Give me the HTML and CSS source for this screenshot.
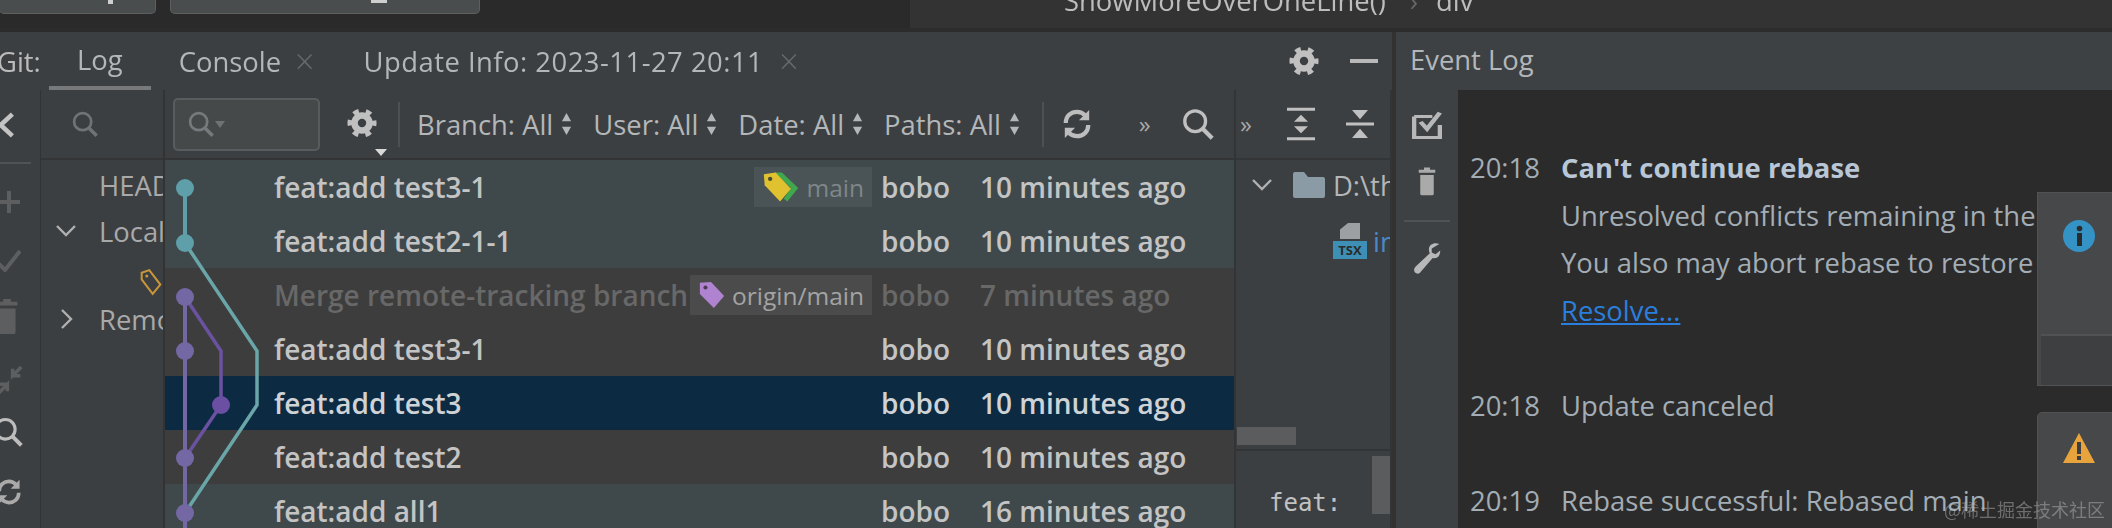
FILE: index.html
```html
<!DOCTYPE html>
<html lang="en">
<head>
    <meta charset="UTF-8">
    <title>Git Log</title>
    <link rel="stylesheet" href="styles.css">
</head>
<body>

<svg class="defs" width="0" height="0">
    <symbol id="gear" viewBox="0 0 32 32">
        <circle cx="16" cy="16" r="8" fill="none" stroke="currentColor" stroke-width="7"/>
        <circle cx="16" cy="16" r="13" fill="none" stroke="currentColor" stroke-width="5" stroke-dasharray="6 7.6" stroke-dashoffset="3"/>
    </symbol>
    <symbol id="search" viewBox="0 0 36 36">
        <circle cx="15" cy="15" r="11" fill="none" stroke="currentColor" stroke-width="3.5"/>
        <path d="M23 23l10 10" stroke="currentColor" stroke-width="4.5" fill="none"/>
    </symbol>
    <symbol id="updown" viewBox="0 0 12 26">
        <path d="M6 1l5 9H1zM6 25l-5-9h10z" fill="currentColor"/>
    </symbol>
    <symbol id="refresh" viewBox="0 0 32 36">
        <path d="M4 17C4 9 10 5 16 5c4 0 7 2 9 4M28 19c0 8-6 12-12 12-4 0-7-2-9-4" fill="none" stroke="currentColor" stroke-width="4.5"/>
        <path d="M29 3v11H18zM3 33V22h11z" fill="currentColor"/>
    </symbol>
    <symbol id="trash" viewBox="0 0 24 40">
        <path d="M8 2h8v3h7v4H1V5h7zM3 12h18v25a2 2 0 0 1-2 2H5a2 2 0 0 1-2-2z" fill="currentColor"/>
    </symbol>
</svg>

<div class="topbar">
    <div class="top-left">
        <div class="top-btn btn-a"><span class="mark mark-a"></span></div>
        <div class="top-btn btn-b"><span class="mark mark-b"></span></div>
    </div>
    <div class="crumbs">
        <span class="crumb-fn">ShowMoreOverOneLine()</span>
        <span class="crumb-sep">›</span>
        <span class="crumb-tag">div</span>
    </div>
</div>

<div class="panes">
    <div class="git">
        <div class="tabs">
            <span class="tab-label">Git:</span>
            <span class="tab tab-log">Log</span>
            <span class="tab tab-console">Console</span>
            <span class="tab-x x-console">×</span>
            <span class="tab tab-update">Update Info: 2023-11-27 20:11</span>
            <span class="tab-x x-update">×</span>
            <span class="tabs-right">
                <svg class="ico-gear"><use href="#gear"/></svg>
                <span class="minus"></span>
            </span>
        </div>

        <div class="git-body">
            <div class="strip">
                <svg class="chev-left" viewBox="0 0 20 30"><path d="M16 3L3 15l13 12" fill="none" stroke="currentColor" stroke-width="5"/></svg>
                <div class="strip-sep"></div>
                <svg class="st-plus" viewBox="0 0 24 24"><path d="M12 1v22M1 12h22" stroke="currentColor" stroke-width="4"/></svg>
                <svg class="st-check" viewBox="0 0 24 24"><path d="M2 16l6 6L23 3" fill="none" stroke="currentColor" stroke-width="4"/></svg>
                <svg class="st-trash"><use href="#trash"/></svg>
                <svg class="st-merge" viewBox="0 0 30 34"><path d="M2 32l10-10V30M12 22H3M28 2L18 12V4M18 12h9" fill="none" stroke="currentColor" stroke-width="4"/></svg>
                <svg class="st-search"><use href="#search"/></svg>
                <svg class="st-refresh"><use href="#refresh"/></svg>
            </div>

            <div class="branches">
                <div class="branches-bar">
                    <svg class="ico-search-dim"><use href="#search"/></svg>
                </div>
                <div class="tree">
                    <div class="tree-row">HEAD</div>
                    <div class="tree-row">
                        <svg class="tree-chev" viewBox="0 0 20 12"><path d="M1 1l9 9 9-9" fill="none" stroke="currentColor" stroke-width="2.4"/></svg>
                        Local
                    </div>
                    <div class="tree-row tree-tag">
                        <svg class="tag-outline" viewBox="0 0 26 32"><path d="M2 5l9-3 13 17-9 11L2 13z" fill="none" stroke="#c8963a" stroke-width="2.4"/><circle cx="8" cy="9" r="1.8" fill="#c8963a"/></svg>
                    </div>
                    <div class="tree-row">
                        <svg class="tree-chev-r" viewBox="0 0 12 20"><path d="M1 1l9 9-9 9" fill="none" stroke="currentColor" stroke-width="2.4"/></svg>
                        Remote
                    </div>
                </div>
            </div>

            <div class="log">
                <div class="log-bar">
                    <div class="search-box">
                        <svg class="ico-search-box"><use href="#search"/></svg>
                        <span class="caret-sm"></span>
                    </div>
                    <div class="gear-wrap">
                        <svg class="ico-gear"><use href="#gear"/></svg>
                        <span class="caret-w"></span>
                    </div>
                    <span class="bar-sep sep-a"></span>
                    <span class="filter">Branch: All <svg class="updown"><use href="#updown"/></svg></span>
                    <span class="filter">User: All <svg class="updown"><use href="#updown"/></svg></span>
                    <span class="filter">Date: All <svg class="updown"><use href="#updown"/></svg></span>
                    <span class="filter">Paths: All <svg class="updown"><use href="#updown"/></svg></span>
                    <span class="bar-sep sep-b"></span>
                    <svg class="ico-refresh"><use href="#refresh"/></svg>
                    <span class="more more-a">»</span>
                    <svg class="ico-search-big"><use href="#search"/></svg>
                </div>

                <div class="rows">
                    <div class="row teal">
                        <div class="subject"><span class="subject-text">feat:add test3-1</span>
                            <span class="ref">
                                <svg class="ref-ico" viewBox="0 0 42 36"><path d="M14 2h8l18 17-12 15-4-3 8-12z" fill="#3fa84f"/><path d="M2 4l13-2 17 18-12 14L3 16z" fill="#e0c12f"/><circle cx="9" cy="9" r="2.4" fill="#4a4a3a"/></svg>
                                <span class="ref-name">main</span>
                            </span>
                        </div>
                        <span class="author">bobo</span><span class="date">10 minutes ago</span>
                    </div>
                    <div class="row teal">
                        <div class="subject"><span class="subject-text">feat:add test2-1-1</span></div>
                        <span class="author">bobo</span><span class="date">10 minutes ago</span>
                    </div>
                    <div class="row dim">
                        <div class="subject"><span class="subject-text">Merge remote-tracking branch</span>
                            <span class="ref">
                                <svg class="ref-ico-sm" viewBox="0 0 30 32"><path d="M2 3l12-1 14 15-11 13L2 15z" fill="#b083d0"/><circle cx="8" cy="8" r="2.2" fill="#4a3a55"/></svg>
                                <span class="ref-name ref-light">origin/main</span>
                            </span>
                        </div>
                        <span class="author">bobo</span><span class="date">7 minutes ago</span>
                    </div>
                    <div class="row">
                        <div class="subject"><span class="subject-text">feat:add test3-1</span></div>
                        <span class="author">bobo</span><span class="date">10 minutes ago</span>
                    </div>
                    <div class="row selected">
                        <div class="subject"><span class="subject-text">feat:add test3</span></div>
                        <span class="author">bobo</span><span class="date">10 minutes ago</span>
                    </div>
                    <div class="row">
                        <div class="subject"><span class="subject-text">feat:add test2</span></div>
                        <span class="author">bobo</span><span class="date">10 minutes ago</span>
                    </div>
                    <div class="row teal">
                        <div class="subject"><span class="subject-text">feat:add all1</span></div>
                        <span class="author">bobo</span><span class="date">16 minutes ago</span>
                    </div>

                    <!-- commit graph on top of the rows -->
                    <svg class="graph" viewBox="0 0 110 368">
                        <path d="M20 28V83" stroke="#5f9fa9" stroke-width="4" fill="none"/>
                        <path d="M20 83l72 108v54l-72 108" stroke="#6aa5a8" stroke-width="3.5" fill="none"/>
                        <path d="M20 137v231" stroke="#7468a4" stroke-width="4" fill="none"/>
                        <path d="M20 137l36 54v54l-36 53" stroke="#6a52a0" stroke-width="3.5" fill="none"/>
                        <circle cx="20" cy="28" r="9" fill="#5f9fa9"/>
                        <circle cx="20" cy="83" r="9" fill="#5f9fa9"/>
                        <circle cx="20" cy="137" r="9" fill="#7468a4"/>
                        <circle cx="20" cy="191" r="9" fill="#7468a4"/>
                        <circle cx="56" cy="245" r="9" fill="#6a4fa3"/>
                        <circle cx="20" cy="298" r="9" fill="#7468a4"/>
                        <circle cx="20" cy="353" r="9" fill="#7468a4"/>
                    </svg>
                </div>
            </div>

            <div class="changes">
                <div class="changes-bar">
                    <span class="more">»</span>
                    <svg class="ico-expand" viewBox="0 0 28 44" preserveAspectRatio="none"><path d="M0 1h28v4H0zM0 39h28v4H0zM14 10l7 9H7zM14 34l-7-9h14z" fill="currentColor"/></svg>
                    <svg class="ico-collapse" viewBox="0 0 28 44" preserveAspectRatio="none"><path d="M0 20h28v4H0zM14 16L6 4h16zM14 28l8 12H6z" fill="currentColor"/></svg>
                </div>
                <div class="files">
                    <div class="file-row">
                        <svg class="tree-chev" viewBox="0 0 20 12"><path d="M1 1l9 9 9-9" fill="none" stroke="currentColor" stroke-width="2.4"/></svg>
                        <svg class="folder" viewBox="0 0 32 26"><path d="M0 2a2 2 0 0 1 2-2h9l4 5h15a2 2 0 0 1 2 2v17a2 2 0 0 1-2 2H2a2 2 0 0 1-2-2z" fill="#8a9ba5"/></svg>
                        <span class="path">D:\thread</span>
                    </div>
                    <div class="file-row file-sub">
                        <span class="tsx"><span class="tsx-page"></span><span class="tsx-label">TSX</span></span>
                        <span class="file-name">index.tsx</span>
                    </div>
                    <div class="hscroll"><span class="hthumb"></span></div>
                </div>
                <div class="details">
                    <pre class="msg">feat:
add</pre>
                    <span class="vthumb"></span>
                </div>
            </div>
        </div>
    </div>

    <div class="events">
        <div class="events-head">Event Log</div>
        <div class="events-body">
            <div class="ev-strip">
                <svg class="ev-check" viewBox="0 0 28 36" preserveAspectRatio="none"><path d="M2 7h17M2 7v27h24V18" fill="none" stroke="currentColor" stroke-width="4"/><path d="M8 14l6 9L26 2" fill="none" stroke="currentColor" stroke-width="4.5"/></svg>
                <svg class="ev-trash"><use href="#trash"/></svg>
                <div class="ev-sep"></div>
                <svg class="ev-wrench" viewBox="0 0 30 36"><path d="M28 2c-5-2-11 0-11 6 0 2 .5 3 1 4L3 26c-2 2-2 4-1 6 2 2 5 2 6 0l13-15c5 1 8-2 8-8l-5 4-4-2V7z" fill="currentColor"/></svg>
            </div>
            <div class="ev-list">
                <div class="ev-row"><span class="ev-time">20:18</span><span class="ev-title">Can't continue rebase</span></div>
                <div class="ev-row"><span class="ev-time"></span><span>Unresolved conflicts remaining in the</span></div>
                <div class="ev-row"><span class="ev-time"></span><span>You also may abort rebase to restore</span></div>
                <div class="ev-row"><span class="ev-time"></span><a class="ev-link">Resolve...</a></div>
                <div class="ev-row ev-gap"><span class="ev-time">20:18</span><span>Update canceled</span></div>
                <div class="ev-row ev-gap"><span class="ev-time">20:19</span><span>Rebase successful: Rebased main</span></div>
            </div>

            <div class="popup popup-info">
                <svg class="pop-ico" viewBox="0 0 32 32"><circle cx="16" cy="16" r="16" fill="#3592c4"/><rect x="14" y="13" width="5" height="13" fill="#2b2b2b"/><circle cx="16.500" cy="8.500" r="2.800" fill="#2b2b2b"/></svg>
                <div class="popup-foot"></div>
            </div>
            <div class="popup popup-warn">
                <svg class="pop-ico" viewBox="0 0 32 32"><path d="M16 1l16 30H0z" fill="#e8a33d"/><rect x="14" y="10" width="4" height="12" fill="#3c3f41"/><rect x="14" y="24" width="4" height="4" fill="#3c3f41"/></svg>
            </div>
            <div class="watermark">@稀土掘金技术社区</div>
        </div>
    </div>
</div>

</body>
</html>
```

FILE: styles.css
```css
html, body {
    margin: 0;
    padding: 0;
    width: 2112px;
    height: 528px;
    overflow: hidden;
    background: #323232;
    color: #bbbbbb;
    font-family: "Open Sans", "Noto Sans", Arial, sans-serif;
    font-size: 27.4px;
}

.defs { position: absolute; }
svg { display: block; flex: none; }

/* the source is a soft, upscaled capture */
.topbar, .panes { filter: blur(0.5px); }

/* Top strip */
.topbar {
    height: 28px;
    display: flex;
    border-bottom: 4px solid #2c2c2c;
    background: #333333;
    overflow: hidden;
}
.top-left {
    width: 910px;
    background: #2a2a2a;
    display: flex;
    gap: 14px;
}
.top-btn {
    height: 14px;
    background: #4a4d4e;
    border: 1px solid #5c5f60;
    border-top: none;
    border-radius: 0 0 5px 5px;
    position: relative;
    box-sizing: border-box;
}
.btn-a { width: 157px; margin-left: -1px; }
.btn-b { width: 310px; }
.mark { position: absolute; top: 0; background: #cfcfcf; }
.mark-a { left: 108px; width: 5px; height: 4px; }
.mark-b { left: 200px; width: 16px; height: 3px; }
.crumbs {
    display: flex;
    align-items: center;
    height: 0;
    margin-top: 0;
    padding-left: 154px;
    color: #bdbdbd;
    white-space: nowrap;
}
.crumb-sep { margin-left: 24px; color: #666666; }
.crumb-tag { margin-left: 18px; }

.panes { display: flex; height: 496px; }

/* Git tool window */
.git { width: 1392px; flex: none; background: #3c3f41; }
.tabs {
    height: 58px;
    display: flex;
    align-items: center;
    position: relative;
    white-space: nowrap;
}
.tab-label { margin-left: -3px; width: 47px; }
.tab { color: #b4b7b9; }
.tab-log { margin-left: 33px; height: 58px; line-height: 56px; }
.tab-log::after {
    content: "";
    position: absolute;
    left: 49px;
    width: 102px;
    bottom: 0;
    height: 4px;
    background: #77797b;
}
.tab-console { margin-left: 56px; }
.tab-x { color: #666a6c; font-size: 34px; font-weight: 300; }
.x-console { margin-left: 14px; }
.tab-update { margin-left: 49px; letter-spacing: 0.5px; }
.x-update { margin-left: 16px; }
.tabs-right {
    margin-left: auto;
    display: flex;
    align-items: center;
    gap: 31px;
    padding-right: 14px;
}
.ico-gear { width: 30px; height: 30px; color: #c0c0c0; }
.minus { width: 28px; height: 4px; background: #b8b8b8; }

.git-body { display: flex; height: 438px; }

.strip {
    width: 41px;
    flex: none;
    display: flex;
    flex-direction: column;
    color: #5c5e60;
    border-right: 1px solid #333333;
    box-sizing: border-box;
    overflow: hidden;
}
.chev-left { width: 18px; height: 30px; margin: 20px 0 0 -2px; color: #c4c4c4; }
.strip-sep { height: 2px; width: 31px; background: #505254; margin-top: 22px; }
.st-plus { width: 24px; height: 24px; margin: 26px 0 0 -3px; }
.st-check { width: 24px; height: 24px; margin: 34px 0 0 -3px; }
.st-trash { width: 24px; height: 38px; margin: 25px 0 0 -5px; }
.st-merge { width: 26px; height: 30px; margin: 30px 0 0 -3px; }
.st-search { width: 32px; height: 32px; margin: 21px 0 0 -8px; color: #bdbdbd; }
.st-refresh { width: 26px; height: 30px; margin: 29px 0 0 -4px; color: #aaaaaa; }

.branches {
    width: 124px;
    flex: none;
    border-right: 2px solid #333333;
    box-sizing: border-box;
    overflow: hidden;
}
.branches-bar {
    height: 68px;
    display: flex;
    align-items: center;
    padding-left: 30px;
    border-bottom: 2px solid #343536;
}
.ico-search-dim { width: 28px; height: 30px; color: #707375; }
.tree-row {
    height: 46px;
    display: flex;
    align-items: center;
    padding-left: 58px;
    position: relative;
    white-space: nowrap;
    color: #a9a9a9;
}
.tree-row:first-child { margin-top: 2px; }
.tree-tag { height: 42px; }
.tree-chev { width: 20px; height: 12px; position: absolute; left: 15px; color: #b0b0b0; }
.tree-chev-r { width: 12px; height: 20px; position: absolute; left: 20px; color: #b0b0b0; }
.tag-outline { width: 22px; height: 28px; position: absolute; left: 99px; top: 14px; }

.log {
    width: 1069px;
    flex: none;
    overflow: hidden;
}
.log-bar {
    height: 68px;
    display: flex;
    align-items: center;
    border-bottom: 2px solid #333435;
    white-space: nowrap;
}
.search-box {
    width: 147px;
    height: 53px;
    margin-left: 8px;
    box-sizing: border-box;
    border: 2px solid #595c5e;
    border-radius: 5px;
    background: #45494a;
    display: flex;
    align-items: center;
    padding-left: 12px;
    flex: none;
}
.ico-search-box { width: 28px; height: 32px; color: #777a7c; }
.caret-sm {
    width: 0;
    height: 0;
    border: 5px solid transparent;
    border-top: 7px solid #6f7274;
    margin: 6px 0 0 0;
}
.gear-wrap { width: 36px; height: 40px; margin-left: 27px; padding-top: 7px; position: relative; flex: none; }
.caret-w {
    position: absolute;
    right: -4px;
    bottom: -8px;
    width: 0;
    height: 0;
    border: 6px solid transparent;
    border-top: 7px solid #d8d8d8;
    border-bottom: none;
}
.bar-sep { width: 2px; height: 45px; background: #4e5052; flex: none; }
.sep-a { margin: 0 17px 0 15px; }
.sep-b { margin: 0 18px 0 1px; }
.filter {
    display: inline-flex;
    align-items: center;
    gap: 8px;
    margin-right: 21px;
    color: #b4b7b9;
}
.updown { width: 11px; height: 24px; color: #b4b7b9; }
.ico-refresh { width: 30px; height: 34px; color: #bdbdbd; }
.more { color: #a8a8a8; font-size: 24px; line-height: 1; }
.more-a { margin-left: 47px; }
.ico-search-big { width: 34px; height: 34px; margin-left: 30px; color: #c0c0c0; }

/* Commit table */
.rows { position: relative; }
.row {
    height: 54px;
    display: grid;
    grid-template-columns: 598px 108px 1fr;
    padding-left: 109px;
    align-items: center;
    font-size: 28px;
    font-weight: 600;
    color: #c4c4c4;
    background: #3d3d3d;
    white-space: nowrap;
}
.row.teal { background: #3f494c; }
.row.selected { background: #0d2a43; color: #cfd3d6; }
.row.dim { color: #686868; }
.subject { display: flex; align-items: center; overflow: hidden; height: 54px; }
.subject-text { flex: 1; overflow: hidden; }
.ref {
    flex: none;
    height: 40px;
    display: flex;
    align-items: center;
    background: #4a5356;
    font-weight: 400;
    padding: 0 8px 0 8px;
    gap: 6px;
    font-size: 24.5px;
}
.dim .ref { background: #4b4b4b; }
.ref-name { color: #7f8789; }
.ref-light { color: #a3a3a3; }
.ref-ico { width: 38px; height: 34px; }
.ref-ico-sm { width: 28px; height: 30px; }
.author { padding-left: 9px; }
.graph {
    position: absolute;
    left: 0;
    top: 0;
    width: 110px;
    height: 368px;
}

/* Changes panel */
.changes {
    width: 158px;
    flex: none;
    border-left: 2px solid #333435;
    border-right: 2px solid #333435;
    box-sizing: border-box;
    overflow: hidden;
}
.changes-bar {
    height: 68px;
    display: flex;
    align-items: center;
    color: #c0c0c0;
    border-bottom: 2px solid #343536;
    padding-left: 4px;
}
.ico-expand { width: 28px; height: 34px; margin-left: 35px; }
.ico-collapse { width: 28px; height: 34px; margin-left: 31px; }
.files { height: 287px; position: relative; white-space: nowrap; }
.file-row { display: flex; align-items: center; position: relative; height: 46px; margin-top: 2px; }
.file-row .tree-chev { left: 16px; }
.folder { width: 32px; height: 26px; margin-left: 57px; }
.path { margin-left: 8px; color: #b4b7b9; }
.file-sub { margin-top: 10px; }
.tsx { width: 34px; height: 36px; margin-left: 97px; position: relative; flex: none; }
.tsx-page {
    position: absolute;
    left: 7px;
    top: 0;
    width: 20px;
    height: 16px;
    background: #9da0a2;
    clip-path: polygon(40% 0, 100% 0, 100% 100%, 0 100%, 0 40%);
}
.tsx-label {
    position: absolute;
    left: 0;
    bottom: 0;
    width: 34px;
    height: 18px;
    background: #3d8fb5;
    color: #2b2b2b;
    font-size: 13px;
    font-weight: 700;
    line-height: 18px;
    text-align: center;
}
.file-name { margin-left: 6px; color: #4a88c7; }
.hscroll {
    position: absolute;
    left: 1px;
    right: 0;
    bottom: 4px;
    height: 18px;
}
.hthumb { display: block; width: 59px; height: 18px; background: #5a5c5e; }
.details {
    height: 81px;
    border-top: 2px solid #333435;
    position: relative;
    overflow: hidden;
}
.msg {
    margin: 0;
    position: absolute;
    left: 33px;
    top: 34px;
    font-family: "DejaVu Sans Mono", "Liberation Mono", monospace;
    font-size: 24px;
    line-height: 36px;
    color: #c2c2c2;
}
.vthumb {
    position: absolute;
    right: 0;
    top: 5px;
    width: 18px;
    height: 58px;
    background: #5a5c5e;
}

/* Event log */
.events { flex: 1; margin-left: 4px; background: #3e4143; }
.events-head { height: 58px; line-height: 56px; padding-left: 14px; color: #b4b7b9; }
.events-body { display: flex; height: 438px; position: relative; overflow: hidden; }
.ev-strip {
    width: 62px;
    flex: none;
    display: flex;
    flex-direction: column;
    align-items: center;
    color: #b8b8b8;
    padding-top: 21px;
    box-sizing: border-box;
}
.ev-check { width: 30px; height: 28px; }
.ev-trash { width: 22px; height: 30px; margin-top: 27px; color: #aaaaaa; }
.ev-sep { width: 46px; height: 2px; background: #505254; margin-top: 24px; }
.ev-wrench { width: 30px; height: 34px; margin-top: 20px; }
.ev-list {
    flex: 1;
    background: #2b2b2b;
    padding: 54px 0 0 12px;
    color: #a3adb5;
    white-space: nowrap;
}
.ev-row { height: 47.5px; line-height: 47.5px; display: flex; }
.ev-gap { margin-top: 47.5px; }
.ev-time { width: 91px; flex: none; color: #a3adb5; }
.ev-title { font-weight: 700; color: #b8c6d6; }
.ev-link { color: #2a7fde; text-decoration: underline; }
.popup {
    position: absolute;
    left: 641px;
    width: 90px;
    background: #46484a;
    border: 1px solid #505254;
    box-sizing: border-box;
}
.popup-info { top: 102px; height: 194px; }
.popup-warn { top: 322px; height: 140px; border-radius: 5px 0 0 0; }
.pop-ico { width: 32px; height: 32px; position: absolute; left: 25px; top: 27px; }
.popup-warn .pop-ico { top: 19px; }
.popup-foot {
    position: absolute;
    left: 3px;
    right: 0;
    bottom: 0;
    height: 49px;
    background: #3e3f41;
    border-top: 2px solid #505254;
}
.watermark {
    position: absolute;
    right: 7px;
    bottom: 6px;
    font-family: "Noto Sans CJK SC", "Noto Sans", sans-serif;
    font-size: 18px;
    color: rgba(190, 190, 190, 0.45);
}
```
